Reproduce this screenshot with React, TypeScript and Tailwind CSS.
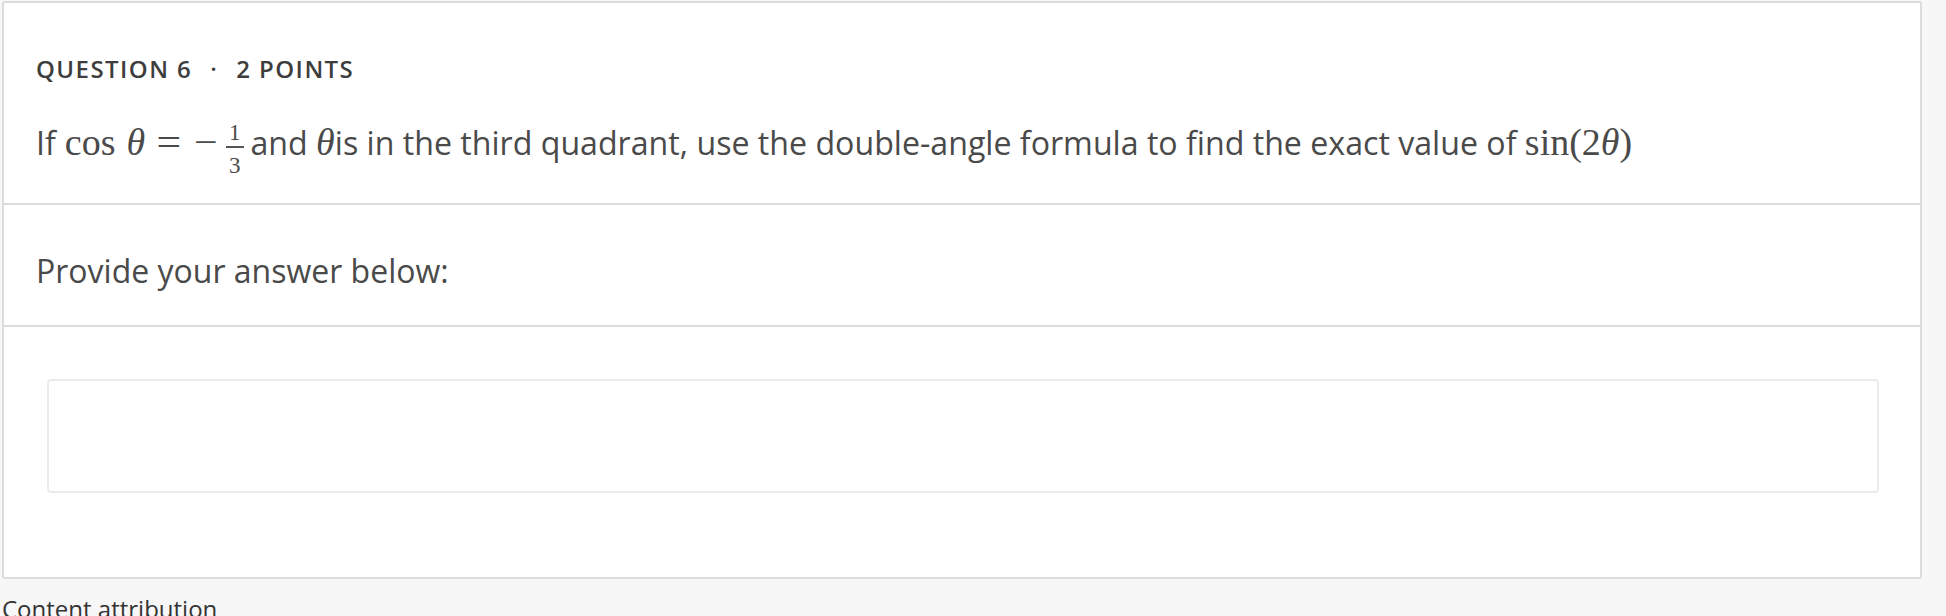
const Frac = ({ n, d }: { n: string; d: string }) => (
  <span className="inline-flex flex-col items-center align-[15px] ml-[10px] mr-[7px] font-['Liberation_Serif',serif] text-[23px] leading-[1]">
    <span className="px-[3px] pb-[2px]">{n}</span>
    <span className="h-[1.5px] w-full bg-[#555]" />
    <span className="px-[3px] pt-[6px]">{d}</span>
  </span>
);

const M = ({ children, className = "" }: { children: React.ReactNode; className?: string }) => (
  <span className={`font-['Liberation_Serif',serif] text-[38px] leading-none ${className}`}>{children}</span>
);

export default function App() {
  return (
    <div className="min-h-[616px] bg-[#f7f7f7] font-['Open_Sans',sans-serif] text-[#4a4a4a] overflow-hidden">
      <div className="ml-[2px] pt-[1px] w-[1920px]">
        <div className="bg-white border-2 border-[#dcdcdc] rounded-[3px]">
          <div className="h-[202px] px-[32px] pt-[46px] border-b-2 border-[#dcdcdc]">
            <div className="flex items-center text-[24px] font-semibold tracking-[0.06em] text-[#3d3d3d] leading-[40px]">
              <span>QUESTION 6</span>
              <span className="mx-[18px]">·</span>
              <span>2 POINTS</span>
            </div>
            <p className="mt-[32px] text-[32.15px] leading-[44px] whitespace-nowrap">
              If
              <M className="ml-[9px]">cos</M>
              <M className="ml-[11px]"><i>θ</i></M>
              <M className="ml-[13px] inline-block scale-x-[1.15]">=</M>
              <M className="ml-[15px] inline-block scale-x-[1.1]">−</M>
              <Frac n="1" d="3" />
              and <M><i>θ</i></M>is in the third quadrant, use the double-angle formula to find the exact value of{" "}
              <M>sin(2<i>θ</i>)</M>
            </p>
          </div>
          <div className="h-[122px] px-[32px] pt-[12px] flex items-center border-b-2 border-[#dcdcdc]">
            <p className="text-[32px] text-[#4a4a4a]">Provide your answer below:</p>
          </div>
          <div className="pt-[52px] pb-[84px] pl-[43px] pr-[41px]">
            <div className="h-[114px] border-2 border-[#ebebeb] rounded-[4px] bg-white" />
          </div>
        </div>
        <p className="mt-[12px] text-[24px] text-[#333]">Content attribution</p>
      </div>
    </div>
  );
}
